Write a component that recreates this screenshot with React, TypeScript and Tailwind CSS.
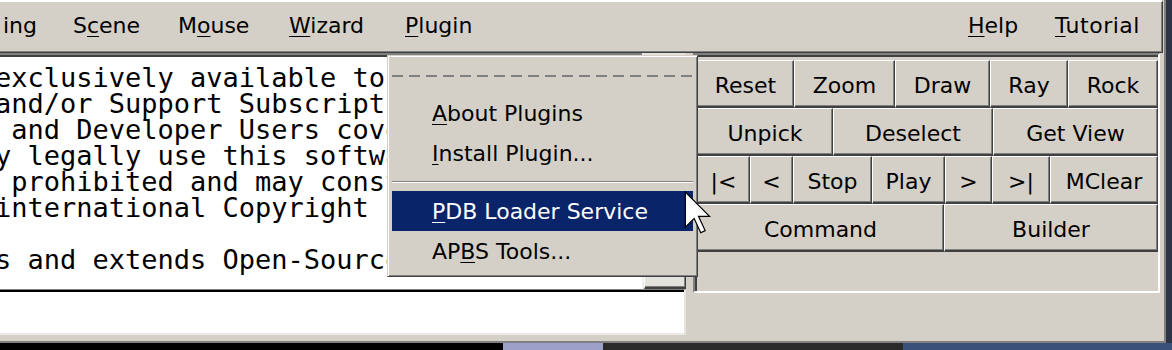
import React from "react"

const sans = { fontFamily: '"DejaVu Sans", Verdana, sans-serif' }
const mono = { fontFamily: '"DejaVu Sans Mono", "Liberation Mono", monospace' }

const btn =
  "flex items-center justify-center pt-[3px] border border-t-white border-l-white border-b-2 border-b-[#404040] border-r-[#404040] shadow-[inset_-1px_-1px_0_#808080] text-[22px] text-black whitespace-nowrap"

const rows: { label: string; w: number }[][] = [
  [
    { label: "Reset", w: 97 },
    { label: "Zoom", w: 101 },
    { label: "Draw", w: 95 },
    { label: "Ray", w: 78 },
    { label: "Rock", w: 90 },
  ],
  [
    { label: "Unpick", w: 136 },
    { label: "Deselect", w: 160 },
    { label: "Get View", w: 165 },
  ],
  [
    { label: "|<", w: 53 },
    { label: "<", w: 43 },
    { label: "Stop", w: 79 },
    { label: "Play", w: 73 },
    { label: ">", w: 47 },
    { label: ">|", w: 58 },
    { label: "MClear", w: 108 },
  ],
  [
    { label: "Command", w: 247 },
    { label: "Builder", w: 214 },
  ],
]

const lines = [
  "exclusively available to Registered PyMOL Users",
  "and/or Support Subscription Holders. Only",
  " and Developer Users covered by a current",
  "y legally use this software. Redistribution",
  " prohibited and may constitute a violation of",
  "international Copyright law.",
  "",
  "s and extends Open-Source PyMOL 1.0.",
]

// text with one underlined mnemonic letter
function Mn({ pre = "", u, post = "" }: { pre?: string; u: string; post?: string }) {
  return (
    <span>
      {pre}
      <span className="underline underline-offset-[3px] decoration-1">{u}</span>
      {post}
    </span>
  )
}

export default function App() {
  return (
    <div className="relative w-[1172px] h-[350px] overflow-hidden bg-[#d4d0c8] flex flex-col" style={sans}>
      <div className="flex h-[343px]">
        <div className="w-[1164px] flex flex-col">
          {/* Menu bar */}
          <div className="h-[53px] w-[1163px] flex items-center pb-[4px] border-t-2 border-t-white border-r border-r-[#404040] border-b border-b-[#404040] shadow-[inset_-1px_-1px_0_#808080] text-[22px] text-black">
            <span className="w-[73px] pl-[3px]">ing</span>
            <span className="w-[105px]"><Mn pre="S" u="c" post="ene" /></span>
            <span className="w-[111px]"><Mn pre="M" u="o" post="use" /></span>
            <span className="w-[116px]"><Mn u="W" post="izard" /></span>
            <span className="w-[100px]"><Mn u="P" post="lugin" /></span>
            <span className="flex-1" />
            <span className="w-[87px]"><Mn u="H" post="elp" /></span>
            <span className="w-[107px] tracking-[0.5px]"><Mn u="T" post="utorial" /></span>
          </div>

          {/* Body */}
          <div className="flex flex-1">
            <div className="w-[693px] flex flex-col">
              <div className="flex h-[236px]">
                {/* output text */}
                <div className="w-[642px] border-t-2 border-t-[#808080] bg-white overflow-hidden">
                  <div className="h-full border-t-2 border-t-[#404040] pt-[8px] overflow-hidden">
                    <div className="-ml-[5px] text-[27px] leading-[26px] text-black whitespace-pre" style={mono}>
                      {lines.map((l, i) => (
                        <div key={i} className="h-[26px]">{l}</div>
                      ))}
                    </div>
                  </div>
                </div>
                {/* scrollbar */}
                <div className="w-[44px] flex flex-col bg-[#e4e2dc] border-l-2 border-l-[#eeeeee]">
                  <div className="flex-1" />
                  <div className={btn + " h-[40px]"}>
                    <svg width="10" height="6" viewBox="0 0 10 6"><path d="M0 0h10L5 5z" fill="#000" /></svg>
                  </div>
                </div>
              </div>
              {/* command line */}
              <div className="w-[686px] h-[46px] border-t border-t-[#808080] border-r-2 border-r-[#e6e4df]">
                <div className="h-full bg-white border-t-2 border-t-black border-b-2 border-b-[#ebe9e4]" />
              </div>
            </div>

            {/* Button panel */}
            <div className="w-[467px] h-[240px] border-l-2 border-t-2 border-l-[#808080] border-t-[#808080] border-r-2 border-b-2 border-r-white border-b-white">
              <div className="h-full border-l-2 border-t-2 border-l-[#404040] border-t-[#404040] pt-[3px] flex flex-col">
                {rows.map((row, ri) => (
                  <div key={ri} className="flex h-[48px]">
                    {row.map((b) => (
                      <div key={b.label} className={btn} style={{ width: b.w }}>
                        {b.label}
                      </div>
                    ))}
                  </div>
                ))}
              </div>
            </div>
          </div>
          <div className="h-[2px] bg-[#808080]" />
        </div>
        {/* window right frame */}
        <div className="w-[2px] bg-[#808080]" />
        <div className="w-[6px] bg-[#2c3448]" />
      </div>
      {/* desktop behind */}
      <div className="flex-1 flex">
        <div className="w-[503px] bg-black" />
        <div className="w-[100px] bg-[#9da0c8]" />
        <div className="w-[300px] bg-[#2a2a2a]" />
        <div className="flex-1 bg-[#3a527a]" />
      </div>

      {/* Plugin drop-down menu */}
      <div className="absolute left-[387px] top-[55px] w-[311px] h-[222px] bg-[#d4d0c8] border border-t-[#d4d0c8] border-l-[#d4d0c8] border-b-[#404040] border-r-[#404040] shadow-[inset_1px_1px_0_#ffffff,inset_-1px_-1px_0_#808080] p-[4px] text-[22px] flex flex-col">
        <div className="h-[33px] flex items-center">
          <svg width="302" height="3" className="block">
            <line x1="0" y1="1" x2="302" y2="1" stroke="#808080" strokeWidth="2" strokeDasharray="11 6" />
          </svg>
        </div>
        <div className="h-[40px] flex items-center pl-[40px] text-black"><Mn u="A" post="bout Plugins" /></div>
        <div className="h-[40px] flex items-center pl-[40px] text-black"><Mn u="I" post="nstall Plugin..." /></div>
        <div className="h-[18px] flex flex-col justify-center">
          <div className="h-px bg-[#808080]" />
          <div className="h-px bg-white" />
        </div>
        <div className="h-[40px] flex items-center pl-[40px] bg-[#0a246a] text-white"><Mn u="P" post="DB Loader Service" /></div>
        <div className="h-[40px] flex items-center pl-[40px] text-black"><Mn pre="AP" u="B" post="S Tools..." /></div>
      </div>

      {/* mouse pointer */}
      <svg className="absolute left-[684px] top-[191px]" width="28" height="44" viewBox="0 0 12.5 20">
        <path d="M0.5 0.5V16.5L4.5 12.5L7.5 19L9.5 18L6.5 11.5H11.5Z" fill="#fff" stroke="#000" strokeWidth="0.55" strokeLinejoin="miter" />
      </svg>
    </div>
  )
}
